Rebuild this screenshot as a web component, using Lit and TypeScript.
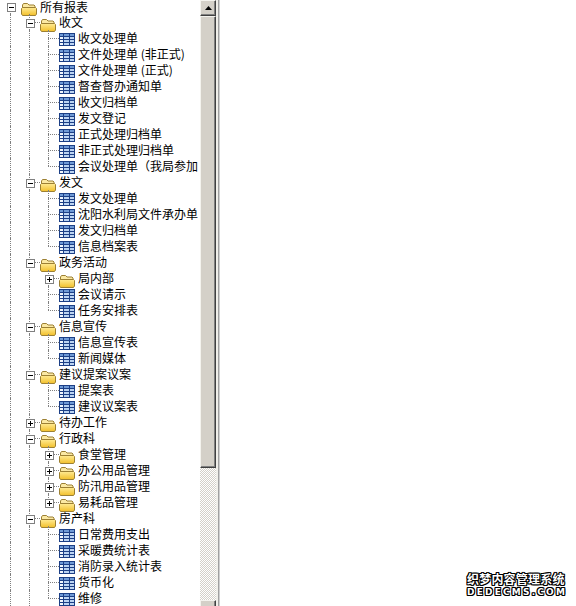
import { LitElement, html, css, svg } from "lit";
import { customElement } from "lit/decorators.js";

interface TreeNode {
  label: string;
  open?: boolean;
  kids?: TreeNode[];
}

const leaf = (label: string): TreeNode => ({ label });
const group = (label: string, ...names: (string | TreeNode)[]): TreeNode => ({
  label,
  open: true,
  kids: names.map((n) => (typeof n === "string" ? leaf(n) : n)),
});
const closed = (label: string): TreeNode => ({ label, open: false, kids: [] });

const TREE: TreeNode = group(
  "所有报表",
  group(
    "收文",
    "收文处理单",
    "文件处理单 (非正式)",
    "文件处理单 (正式)",
    "督查督办通知单",
    "收文归档单",
    "发文登记",
    "正式处理归档单",
    "非正式处理归档单",
    "会议处理单（我局参加"
  ),
  group("发文", "发文处理单", "沈阳水利局文件承办单", "发文归档单", "信息档案表"),
  group("政务活动", closed("局内部"), "会议请示", "任务安排表"),
  group("信息宣传", "信息宣传表", "新闻媒体"),
  group("建议提案议案", "提案表", "建议议案表"),
  closed("待办工作"),
  group("行政科", closed("食堂管理"), closed("办公用品管理"), closed("防汛用品管理"), closed("易耗品管理")),
  group("房产科", "日常费用支出", "采暖费统计表", "消防录入统计表", "货币化", "维修")
);

type Guide = "pipe" | "tee" | "elbow" | "root";

interface Row {
  node: TreeNode;
  guides: Guide[];
}

// one guide per depth, the last one is the connector of the row itself
function flatten(node: TreeNode, guides: Guide[], rows: Row[]) {
  rows.push({ node, guides });
  if (!node.open || !node.kids) return;
  const lead: Guide[] = guides.map(() => "pipe");
  node.kids.forEach((kid, i) => {
    const last = i === node.kids!.length - 1;
    // the second level runs on past the fold, so only the third one closes
    flatten(kid, [...lead, last && guides.length === 2 ? "elbow" : "tee"], rows);
  });
}

const folderIcon = svg`<svg class="icon folder" width="16" height="13" viewBox="0 0 16 13">
  <defs>
    <linearGradient id="fold" x1="0" y1="0" x2="0" y2="1">
      <stop offset="0" stop-color="#ffeb94" />
      <stop offset="1" stop-color="#f2bf2a" />
    </linearGradient>
  </defs>
  <path d="M1.5 11V2L2.5 0.5H6.5L8 2H13L14 3V5" fill="#fbe9a4" stroke="#9c8034" />
  <path d="M0.5 11V5.5L1.5 4.5H14.5L15.5 5.5V11L14.5 12.5H1.5Z" fill="url(#fold)" stroke="#9c8034" />
</svg>`;

const tableIcon = svg`<svg class="icon table" width="16" height="13" viewBox="0 0 16 13">
  <rect x="0.5" y="0.5" width="15" height="12" fill="#f2f7fd" stroke="#1c3f86" />
  <rect x="1" y="1" width="14" height="2" fill="#6f9ad6" />
  <rect x="5" y="4" width="10" height="8" fill="#bcd4f2" />
  <path d="M0.5 3.5H15.5M0.5 6.5H15.5M0.5 9.5H15.5M4.5 0.5V12.5M10.5 0.5V12.5" fill="none" stroke="#1c3f86" />
</svg>`;

@customElement("app-root")
export class AppRoot extends LitElement {
  static styles = css`
    :host {
      display: block;
      width: 576px;
      height: 606px;
      overflow: hidden;
      background: #fff;
      position: relative;
      font-family: "Noto Sans CJK SC", "Liberation Sans", sans-serif;
      font-size: 12px;
      color: #000;
    }
    .frame {
      display: flex;
      height: 606px;
      overflow: hidden;
    }
    .tree {
      width: 200px;
      height: 606px;
      overflow: hidden;
      padding-left: 1px;
      box-sizing: border-box;
      flex: none;
    }
    .row {
      display: flex;
      height: 16px;
      align-items: flex-start;
      white-space: nowrap;
    }
    .row.first {
      height: 14px;
    }
    .row.first .label {
      line-height: 14px;
    }
    .row.first .slot {
      margin-top: -2px;
    }
    .cell {
      width: 19px;
      height: 100%;
      flex: none;
      position: relative;
    }
    .cell::before {
      content: "";
      position: absolute;
      left: 9px;
      top: 0;
      bottom: 0;
      border-left: 1px dotted #808080;
    }
    .cell.elbow::before {
      bottom: 8px;
    }
    .cell.root::before {
      top: 6px;
    }
    .cell.tee::after,
    .cell.elbow::after {
      content: "";
      position: absolute;
      left: 9px;
      right: -1px;
      top: 8px;
      border-top: 1px dotted #808080;
    }
    .box {
      position: absolute;
      left: 6px;
      top: 5px;
      width: 9px;
      height: 9px;
      box-sizing: border-box;
      border: 1px solid #808080;
      background: #fff;
      z-index: 1;
    }
    .first .box {
      top: 3px;
    }
    .box::before {
      content: "";
      position: absolute;
      left: 1px;
      top: 3px;
      width: 5px;
      height: 1px;
      background: #000;
    }
    .box.plus::after {
      content: "";
      position: absolute;
      left: 3px;
      top: 1px;
      width: 1px;
      height: 5px;
      background: #000;
    }
    .slot {
      width: 19px;
      margin-left: 1px;
      flex: none;
    }
    .icon {
      display: block;
    }
    .folder {
      margin-top: 5px;
    }
    .table {
      margin-top: 3px;
    }
    .label {
      line-height: 16px;
    }
    .scrollbar {
      width: 16px;
      flex: none;
      display: flex;
      flex-direction: column;
    }
    .arrow,
    .thumb {
      background: #d4d0c8;
      box-sizing: border-box;
      border: 1px solid;
      border-color: #f4f3ee #404040 #404040 #f4f3ee;
      box-shadow: inset -1px -1px 0 #808080;
      flex: none;
    }
    .arrow {
      height: 16px;
      display: flex;
      align-items: center;
      justify-content: center;
    }
    .thumb {
      height: 452px;
    }
    .track {
      height: 132px;
      flex: none;
      background-color: #fff;
      background-image: conic-gradient(#d4d0c8 25%, #fff 0 50%, #d4d0c8 0 75%, #fff 0);
      background-size: 2px 2px;
    }
    .splitter {
      width: 4px;
      flex: none;
      background: linear-gradient(90deg, #f0efea 2px, #a0a0a0 2px 3px, #d0d0d0 3px);
    }
    .content {
      flex: 1;
    }
    .mark {
      position: absolute;
      left: 467px;
      top: 572px;
      width: 98px;
      color: #fff;
      font-weight: 700;
      white-space: nowrap;
      text-shadow: 1px 0 0 #000, -1px 0 0 #000, 0 1px 0 #000, 0 -1px 0 #000, 1px 1px 0 #000, -1px -1px 0 #000,
        1px -1px 0 #000, -1px 1px 0 #000;
    }
    .mark .cn {
      font-size: 12px;
      line-height: 14px;
      letter-spacing: 0.2px;
    }
    .mark .en {
      font-family: "DejaVu Sans", sans-serif;
      font-size: 9px;
      letter-spacing: 2.2px;
      line-height: 10px;
      margin-top: 1px;
    }
  `;

  private renderRow(row: Row, index: number) {
    const { node, guides } = row;
    const isFolder = node.kids !== undefined;
    const own = guides.length - 1;
    return html`<div class="row ${index === 0 ? "first" : ""}">
      ${guides.map(
        (g, i) => html`<div class="cell ${g}">
          ${i === own && isFolder ? html`<span class="box ${node.open ? "" : "plus"}"></span>` : ""}
        </div>`
      )}
      <div class="slot">${isFolder ? folderIcon : tableIcon}</div>
      <span class="label">${node.label}</span>
    </div>`;
  }

  render() {
    const rows: Row[] = [];
    flatten(TREE, ["root"], rows);
    return html`<div class="frame">
        <div class="tree">${rows.map((r, i) => this.renderRow(r, i))}</div>
        <div class="scrollbar">
          <div class="arrow">
            <svg width="7" height="4" viewBox="0 0 7 4"><path d="M3.5 0L7 4H0Z" fill="#000" /></svg>
          </div>
          <div class="thumb"></div>
          <div class="track"></div>
          <div class="arrow"></div>
        </div>
        <div class="splitter"></div>
        <div class="content"></div>
      </div>
      <div class="mark">
        <div class="cn">织梦内容管理系统</div>
        <div class="en">DEDECMS.COM</div>
      </div>`;
  }
}
